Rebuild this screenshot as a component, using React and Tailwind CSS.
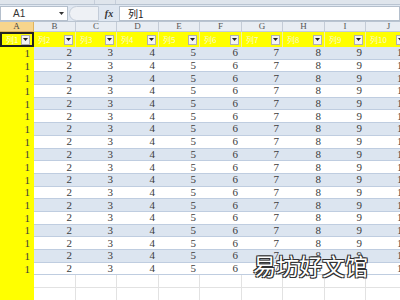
const cols = ['A', 'B', 'C', 'D', 'E', 'F', 'G', 'H', 'I', 'J'];
const widths = [34, 42, 41, 42, 41, 42, 41, 42, 41, 46];
const dataRows = Array.from({ length: 18 }, (_, i) => i);
const emptyRows = [0, 1];

const Arrow = () => (
  <div className="w-[9px] h-[10px] bg-[#f2f2f2] border border-[#b0b0b0] flex items-center justify-center shrink-0">
    <svg width="5" height="3" viewBox="0 0 5 3">
      <path d="M0 0H5L2.5 3Z" fill="#222" />
    </svg>
  </div>
);

const App = () => {
  return (
    <div className="w-[400px] h-[300px] overflow-hidden relative bg-white" style={{ fontFamily: '"Liberation Serif", "Noto Sans CJK SC", serif' }}>
      {/* ribbon bottom strip */}
      <div className="h-[5px] bg-[#dfe5ec] border-b border-[#b9c4d1] flex">
        <div className="w-[100px] border-r border-[#c6ceda]" />
        <div className="w-[300px] ml-[20px] border-l border-[#c6ceda]" />
      </div>

      {/* formula bar */}
      <div className="h-[17px] flex items-center bg-[#dfe7f1] border-b border-[#b9c4d1]">
        <div className="w-[68px] h-[15px] bg-white border border-[#b4bfcc] flex items-center justify-between pl-[12px] pr-[3px] text-[10px] text-[#333]" style={{ fontFamily: '"Liberation Sans", sans-serif' }}>
          <span>A1</span>
          <svg width="5" height="3" viewBox="0 0 5 3">
            <path d="M0 0H5L2.5 3Z" fill="#333" />
          </svg>
        </div>
        <div className="w-[30px] h-[15px] ml-[1px] bg-[#eef1f5] border border-[#c3ccd8] rounded-l-[8px]" />
        <div className="w-[20px] h-[15px] flex items-center justify-center text-[10px] italic text-[#333] font-bold">
          fx
        </div>
        <div className="flex-1 h-[15px] bg-white border border-[#b4bfcc] flex items-center pl-[8px] text-[10px] text-[#222]" style={{ fontFamily: '"Noto Sans CJK SC", sans-serif' }}>
          列1
        </div>
      </div>

      {/* column headers */}
      <div className="flex h-[10px]">
        {cols.map((c, i) => (
          <div
            key={c}
            style={{ width: widths[i] }}
            className={`shrink-0 flex items-center justify-center text-[9px] leading-none border-r border-b ${i === 0 ? 'bg-[#f7d58c] border-[#e0b35b] text-[#444]' : 'bg-[#e8edf3] border-[#c4ccd7] text-[#555]'}`}
          >
            {c}
          </div>
        ))}
      </div>

      {/* filter row */}
      <div className="flex h-[15px]">
        {cols.map((c, i) => (
          <div
            key={c}
            style={{ width: widths[i] }}
            className={`shrink-0 flex items-center justify-between bg-[#ffff00] pl-[4px] ${i === 9 ? 'pr-[6px]' : 'pr-[2px]'} ${i === 0 ? 'border-2 border-[#222]' : 'border-r border-[#f2f2a0]'}`}
          >
            <span className="text-[8px] text-[#fafad2]" style={{ fontFamily: '"Noto Sans CJK SC", sans-serif' }}>列{i + 1}</span>
            <Arrow />
          </div>
        ))}
      </div>

      {/* data rows */}
      {dataRows.map((r) => (
        <div key={r} className="flex h-[12.7px]">
          {cols.map((c, i) => (
            <div
              key={c}
              style={{ width: widths[i] }}
              className={`shrink-0 flex items-center justify-end pr-[4px] text-[11px] leading-none text-[#3c3c3c] ${
                i === 0
                  ? 'bg-[#ffff00]'
                  : r % 2 === 0
                  ? 'bg-[#dce5f0] border-b border-[#bfcde0]'
                  : 'bg-white border-b border-[#bfcde0]'
              }`}
            >
              {i + 1}
            </div>
          ))}
        </div>
      ))}

      {/* empty rows */}
      {emptyRows.map((r) => (
        <div key={r} className="flex h-[13px]">
          {cols.map((c, i) => (
            <div
              key={c}
              style={{ width: widths[i] }}
              className={`shrink-0 ${i === 0 ? 'bg-[#ffff00]' : 'border-r border-b border-[#e2e2e2]'}`}
            />
          ))}
        </div>
      ))}

      {/* watermark */}
      <div
        className="absolute left-[253px] top-[254px] text-[23px] leading-none text-white"
        style={{ fontFamily: '"Noto Sans CJK SC", sans-serif', textShadow: '0 0 1px #222, 1px 1px 0 #333, -1px -1px 0 #333, 1px -1px 0 #333, -1px 1px 0 #333' }}
      >
        易坊好文馆
      </div>
    </div>
  );
};

export default App;
